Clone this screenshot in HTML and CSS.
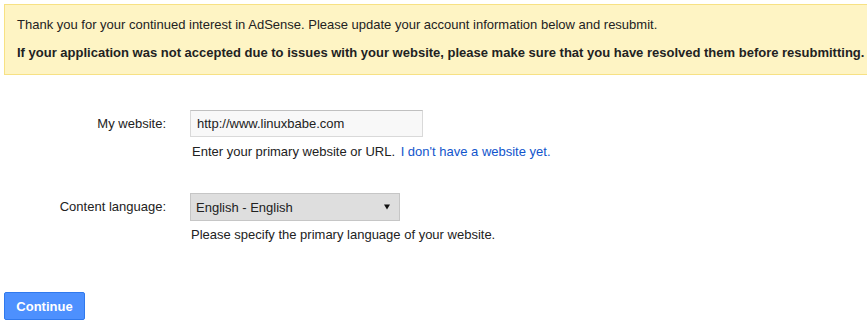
FILE: index.html
```html
<!DOCTYPE html>
<html>
<head>
<meta charset="utf-8">
<link rel="stylesheet" href="styles.css">
</head>
<body>
<div class="notice">
  <p class="notice-line">Thank you for your continued interest in AdSense. Please update your account information below and resubmit.</p>
  <p class="notice-line notice-bold">If your application was not accepted due to issues with your website, please make sure that you have resolved them before resubmitting.</p>
</div>
<div class="form">
  <div class="row row-website">
    <label class="label">My website:</label>
    <div class="field">
      <input class="text-input" type="text" value="http://www.linuxbabe.com">
      <div class="help">Enter your primary website or URL. <a class="link" href="#">I don't have a website yet.</a></div>
    </div>
  </div>
  <div class="row row-language">
    <label class="label">Content language:</label>
    <div class="field">
      <div class="select">
        <span class="select-text">English - English</span>
        <svg class="select-arrow" width="6" height="6" viewBox="0 0 6 6"><path d="M0 0.5H6L3 5.5Z" fill="#111"/></svg>
      </div>
      <div class="help help-lang">Please specify the primary language of your website.</div>
    </div>
  </div>
</div>
<button class="continue">Continue</button>
</body>
</html>
```
FILE: styles.css
```css
html, body {
  margin: 0;
  padding: 0;
  overflow: hidden;
}
body {
  padding: 4px;
  font-family: Arial, "Liberation Sans", sans-serif;
  font-size: 13px;
  color: #222;
}
.notice {
  width: 900px;
  background: #fef4c4;
  border: 1px solid #f7e184;
  padding: 12px 12px 13px 12px;
  box-sizing: border-box;
}
.notice-line {
  margin: 0;
  line-height: 16px;
}
.notice-bold {
  font-weight: bold;
  margin-top: 12px;
}
.form {
  margin-top: 35px;
  display: flex;
  flex-direction: column;
  gap: 33px;
}
.row {
  display: grid;
  grid-template-columns: 162px 1fr;
  column-gap: 24px;
}
.label {
  text-align: right;
  line-height: 27px;
}
.row-language .label {
  line-height: 28px;
}
.field {
  display: flex;
  flex-direction: column;
  align-items: flex-start;
}
.text-input {
  width: 233px;
  height: 27px;
  box-sizing: border-box;
  margin: 0;
  border: 1px solid #d9d9d9;
  border-top-color: #c0c0c0;
  background: #f8f8f8;
  padding: 0 6px;
  font-family: Arial, "Liberation Sans", sans-serif;
  font-size: 13px;
  color: #222;
  outline: none;
}
.help {
  margin-top: 7px;
  line-height: 16px;
  padding-left: 2px;
}
.help-lang {
  margin-top: 6px;
  padding-left: 1px;
}
.link {
  color: #1155cc;
  text-decoration: none;
  margin-left: 2px;
}
.select {
  width: 210px;
  height: 28px;
  box-sizing: border-box;
  border: 1px solid #c6c6c6;
  background: #dedede;
  display: flex;
  align-items: center;
  justify-content: space-between;
  padding: 0 9px 0 5px;
  color: #222;
}
.select-arrow {
  display: block;
}
.continue {
  margin-top: 49px;
  width: 81px;
  height: 28px;
  box-sizing: border-box;
  border: 1px solid #3079ed;
  border-radius: 2px;
  background: #4d90fe;
  color: #fff;
  font-family: Arial, "Liberation Sans", sans-serif;
  font-size: 13px;
  font-weight: bold;
  padding: 0;
  display: block;
}
```
